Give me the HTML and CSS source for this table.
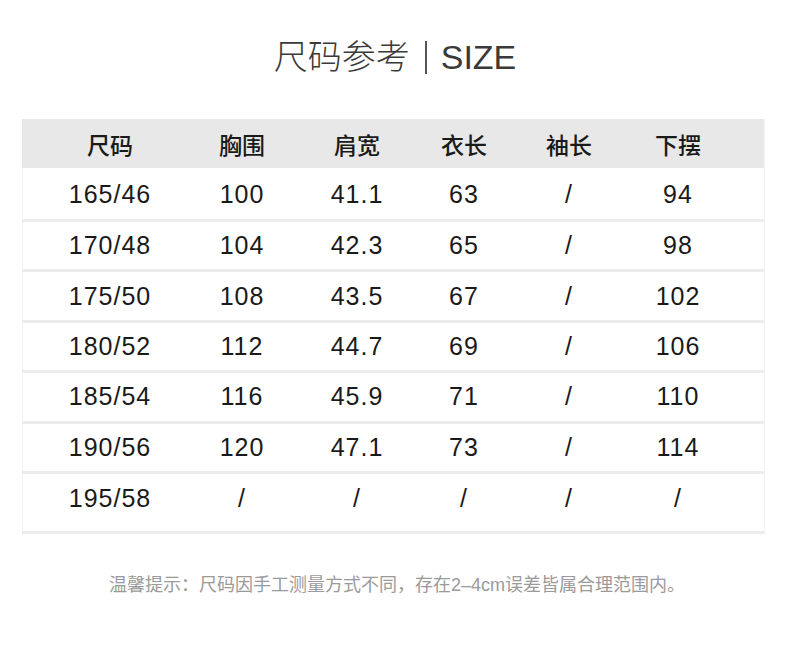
FILE: index.html
```html
<!DOCTYPE html>
<html lang="zh">
<head>
<meta charset="utf-8">
<title>尺码参考 | SIZE</title>
<link rel="stylesheet" href="styles.css">
</head>
<body>
<h1 class="title">尺码参考<span class="bar"></span>SIZE</h1>
<div class="table">
  <div class="row head">
    <div>尺码</div><div>胸围</div><div>肩宽</div><div>衣长</div><div>袖长</div><div>下摆</div><div></div>
  </div>
  <div class="row first"><div>165/46</div><div>100</div><div>41.1</div><div>63</div><div>/</div><div>94</div><div></div></div>
  <div class="row"><div>170/48</div><div>104</div><div>42.3</div><div>65</div><div>/</div><div>98</div><div></div></div>
  <div class="row"><div>175/50</div><div>108</div><div>43.5</div><div>67</div><div>/</div><div>102</div><div></div></div>
  <div class="row"><div>180/52</div><div>112</div><div>44.7</div><div>69</div><div>/</div><div>106</div><div></div></div>
  <div class="row"><div>185/54</div><div>116</div><div>45.9</div><div>71</div><div>/</div><div>110</div><div></div></div>
  <div class="row"><div>190/56</div><div>120</div><div>47.1</div><div>73</div><div>/</div><div>114</div><div></div></div>
  <div class="row last"><div>195/58</div><div>/</div><div>/</div><div>/</div><div>/</div><div>/</div><div></div></div>
</div>
<p class="note">温馨提示：尺码因手工测量方式不同，存在2–4cm误差皆属合理范围内。</p>
</body>
</html>
```
FILE: styles.css
```css
html, body {
  margin: 0;
  padding: 0;
  background: #ffffff;
}
body {
  font-family: "Liberation Sans", "Noto Sans CJK SC", sans-serif;
  color: #222;
}
.title {
  margin: 0;
  padding-top: 33px;
  height: 86px;
  box-sizing: border-box;
  display: flex;
  justify-content: center;
  align-items: flex-start;
  font-size: 34px;
  line-height: 48px;
  font-weight: 300;
  color: #3a3a3a;
}
.bar {
  display: inline-block;
  width: 2px;
  height: 33px;
  background: #555;
  margin: 8px 14px 0 15px;
}
.table {
  margin: 33px 25px 0 22px;
  border-left: 1px solid #f3f3f3;
  border-right: 1px solid #f3f3f3;
}
.row {
  display: grid;
  grid-template-columns: 176px 88px 142px 72px 138px 80px 1fr;
  height: 47.4px;
  align-items: center;
  justify-items: center;
  font-size: 25px;
  letter-spacing: 1px;
  color: #1a1a1a;
  border-bottom: 3px solid #ececec;
  margin-left: -1px;
}
.row > div {
  white-space: nowrap;
}
.row.head {
  height: 49px;
  background: #e8e8e8;
  border-bottom: none;
  font-size: 23px;
  font-weight: 500;
  letter-spacing: 0;
  color: #1a1a1a;
}
.row.first {
  height: 49px;
  padding-top: 2px;
}
.row.last {
  align-items: start;
  padding-top: 10px;
  box-sizing: border-box;
  height: 60px;
}
.note {
  margin: 36px 0 0;
  text-align: center;
  font-size: 18px;
  color: #9a9a9a;
  padding-left: 4px;
}
```
